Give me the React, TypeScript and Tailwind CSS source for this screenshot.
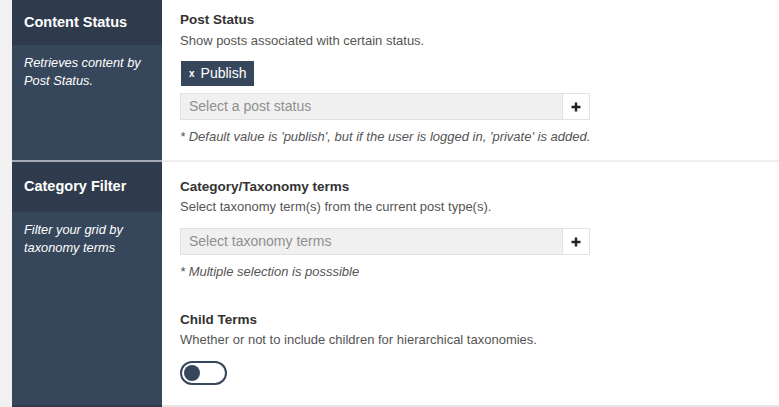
import React from "react";

const font = { fontFamily: '"Liberation Sans", Arial, sans-serif' };

function Select({ placeholder }: { placeholder: string }) {
  return (
    <div className="flex w-[410px] h-[27px] border border-[#e2e2e2] bg-[#f0f0f0]">
      <div className="flex-1 flex items-center pl-[8px] text-[14px] text-[#8f8f8f]">{placeholder}</div>
      <div className="w-[27px] bg-white border-l border-[#e2e2e2] flex items-center justify-center">
        <svg width="10" height="10" viewBox="0 0 10 10">
          <path d="M5 0.5v9M0.5 5h9" stroke="#222" strokeWidth="2.4" />
        </svg>
      </div>
    </div>
  );
}

function Side({ title, desc, headerH }: { title: string; desc: React.ReactNode; headerH: string }) {
  return (
    <div className="w-[150px] shrink-0 bg-[#37475b] flex flex-col">
      <div className={`${headerH} bg-[#2f3b4d] flex items-center pl-3 text-white font-bold text-[14.5px]`}>{title}</div>
      <div className="pl-3 pr-2 pt-[9px] text-white italic text-[12.8px] leading-[18px]">{desc}</div>
    </div>
  );
}

export default function App() {
  return (
    <div style={font} className="w-[779px] h-[407px] bg-[#f1f1f1] pl-3 overflow-hidden">
      <div className="bg-white">
        <div className="flex h-[160px]">
          <Side title="Content Status" headerH="h-[45px]" desc={<>Retrieves content by<br />Post Status.</>} />
          <div className="flex-1 pl-[18px] pt-[12px]">
            <div className="text-[13.5px] font-bold text-[#333] leading-[16px]">Post Status</div>
            <div className="text-[13px] text-[#555] mt-[5px] leading-[16px]">Show posts associated with certain status.</div>
            <div className="mt-[12px] ml-px inline-flex items-center h-[25px] px-[8px] bg-[#37475b] text-white text-[14px]">
              <span className="text-[10px] font-bold mr-[6px]">x</span>Publish
            </div>
            <div className="mt-[7px]">
              <Select placeholder="Select a post status" />
            </div>
            <div className="mt-[9px] text-[13px] italic text-[#555] leading-[16px]">
              * Default value is 'publish', but if the user is logged in, 'private' is added.
            </div>
          </div>
        </div>
        <div className="flex h-[2px]">
          <div className="w-[150px] bg-[#a3aab3]" />
          <div className="flex-1 bg-[#eeeeee]" />
        </div>
        <div className="flex h-[243px]">
          <Side title="Category Filter" headerH="h-[50px]" desc={<>Filter your grid by<br />taxonomy terms</>} />
          <div className="flex-1 pl-[18px] pt-[17px]">
            <div className="text-[13.5px] font-bold text-[#333] leading-[16px]">Category/Taxonomy terms</div>
            <div className="text-[13px] text-[#555] mt-[4px] leading-[16px]">Select taxonomy term(s) from the current post type(s).</div>
            <div className="mt-[13px]">
              <Select placeholder="Select taxonomy terms" />
            </div>
            <div className="mt-[9px] text-[13px] italic text-[#555] leading-[16px]">* Multiple selection is posssible</div>
            <div className="mt-[32px] text-[13.5px] font-bold text-[#333] leading-[16px]">Child Terms</div>
            <div className="text-[13px] text-[#555] mt-[4px] leading-[16px]">Whether or not to include children for hierarchical taxonomies.</div>
            <div className="mt-[13px] w-[47px] h-[24px] rounded-full border-2 border-[#37475b] flex items-center pl-[2px]">
              <div className="w-[16px] h-[16px] rounded-full bg-[#37475b]" />
            </div>
          </div>
        </div>
        <div className="flex h-[2px]">
          <div className="w-[150px] bg-[#2f3b4d]" />
          <div className="flex-1 bg-[#e5e5e5]" />
        </div>
      </div>
    </div>
  );
}
